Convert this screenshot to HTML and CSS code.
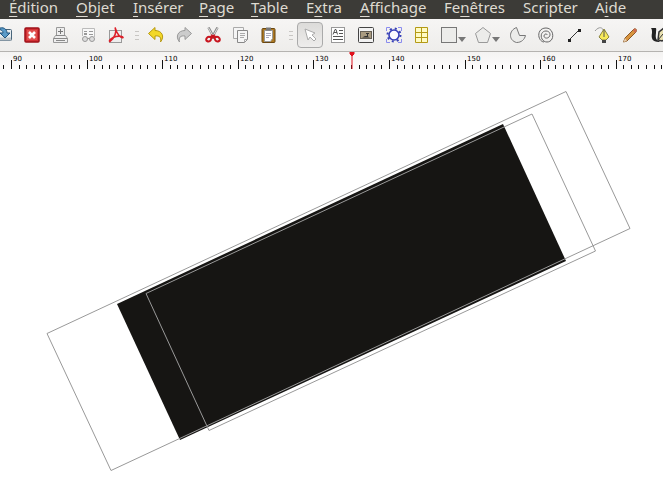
FILE: index.html
```html
<!DOCTYPE html>
<html lang="fr">
<head>
<meta charset="utf-8">
<title>Document</title>
<link rel="stylesheet" href="styles.css">
</head>
<body>
<nav class="menubar">
  <button><u>É</u>dition</button>
  <button><u>O</u>bjet</button>
  <button><u>I</u>nsérer</button>
  <button><u>P</u>age</button>
  <button><u>T</u>able</button>
  <button>E<u>x</u>tra</button>
  <button><u>A</u>ffichage</button>
  <button>Fe<u>n</u>êtres</button>
  <button>Scripter</button>
  <button>A<u>i</u>de</button>
</nav>
<div class="toolbar">
  <button aria-label="Enregistrer"><svg viewBox="0 0 20 20"><rect x="2.500" y="4.500" width="15" height="11" rx="1" fill="#e8edf0" stroke="#49657a"/><path d="M3 12.500h14v3H3z" fill="#bfc6ca"/><path d="M4 4c5-3 9 0 9 4h3l-5 5-5-5h3c0-2-1-3-5-4z" fill="#5b9bc8" stroke="#20537c"/></svg></button>
  <button aria-label="Fermer"><svg viewBox="0 0 20 20"><rect x="3" y="3" width="14" height="14" rx="1" fill="#d33034" stroke="#9e1018" stroke-width="1.500"/><rect x="5" y="5" width="10" height="10" fill="#e0504e"/><path d="M7 7l6 6M13 7l-6 6" stroke="#fff" stroke-width="2.600"/></svg></button>
  <button aria-label="Imprimer"><svg viewBox="0 0 20 20" fill="#eee" stroke="#999"><path d="M6.500 10V2.500h8V10M5.500 10.500h10l2 3v4h-14v-4z"/><path d="M3.500 13.500h14M6 15.500h9M6 10.500h9" stroke="#888"/><path d="M10.500 4v5M8 6.500h5" stroke="#777"/></svg></button>
  <button aria-label="Vérifier"><svg viewBox="0 0 20 20" fill="none" stroke="#999"><path d="M4.500 11V3.500h12V12" fill="#f8f8f8" stroke="#bbb"/><path d="M6 6.500h3M11 6.500h4M11 9.500h4"/><path d="M6 9h3" stroke-width="2"/><circle cx="7" cy="14" r="2.500" fill="#ddd"/><circle cx="14" cy="14" r="2.500" fill="#ddd"/><path d="M9.500 13.500h2"/></svg></button>
  <button aria-label="Exporter en PDF"><svg viewBox="0 0 20 20"><rect x="3.500" y="5.500" width="12" height="12" fill="#eee" stroke="#999"/><path d="M9 2.500c2 4 0 10-5 14-2-1 2-4 6-5s7 0 7 1c-2 1-6-3-8-10z" fill="none" stroke="#dc202a" stroke-width="1.600"/></svg></button>
  <span class="grip"></span>
  <button aria-label="Annuler"><svg viewBox="0 0 20 20"><path d="M2.500 8.500L9 2.500v3c7 0 10 6 5.500 11.500 1-5-1-6.500-5.500-6v3.500z" fill="#f3d829" stroke="#b79910"/></svg></button>
  <button aria-label="Rétablir"><svg viewBox="0 0 20 20"><path d="M17.500 8.500L11 2.500v3c-7 0-10 6-5.500 11.500-1-5 1-6.500 5.500-6v3.500z" fill="#ccc" stroke="#999"/></svg></button>
  <button aria-label="Couper"><svg viewBox="0 0 20 20" fill="none"><path d="M6.500 2.500l6 11M15.500 2.500l-6 11" stroke="#888" stroke-width="2.500"/><path d="M6.500 3l5 9M15.500 3l-5 9" stroke="#ddd"/><path d="M11 11l-3 1c-3-1-5 3-3 4s4 0 4-2zM11 11l3 1c3-1 5 3 3 4s-4 0-4-2z" stroke="#c8141e" stroke-width="2"/></svg></button>
  <button aria-label="Copier"><svg viewBox="0 0 20 20" fill="#f5f5f5" stroke="#888"><path d="M3.500 2.500h10v11h-10z" stroke="#aaa"/><path d="M7.500 5.500h10v9l-3 3h-7z"/><path d="M10 8.500h5M10 10.500h5M10 12.500h4M14.500 17v-2.500H17" stroke="#aaa"/></svg></button>
  <button aria-label="Coller"><svg viewBox="0 0 20 20"><rect x="4" y="3.500" width="13" height="14" rx="1" fill="#ad7922" stroke="#694711"/><path d="M6.500 5.500h8v8l-2 3h-6z" fill="#fff" stroke="#999"/><path d="M8 2.500h5v3H8z" fill="#777"/><path d="M8 8.500h5M8 10.500h5M8 12.500h3" stroke="#aab"/></svg></button>
  <span class="grip grip-wide"></span>
  <button class="active" aria-label="Sélectionner"><svg viewBox="0 0 20 20"><path d="M5 4l10 4-3 2 4 4-2 2-4-4-2 3z" fill="#fff" stroke="#aaa"/></svg></button>
  <button aria-label="Cadre de texte"><svg viewBox="0 0 20 20" fill="none" stroke="#555"><rect x="3.500" y="2.500" width="13" height="15" fill="#fff" stroke="#999"/><path d="M5 9.500l2-5h1l1.500 5M6 7.500h3M11 5.500h4M11 8.500h4M5 11.500h10M5 14.500h10"/></svg></button>
  <button aria-label="Cadre d’image"><svg viewBox="0 0 20 20"><rect x="2.500" y="2.500" width="15" height="15" rx="1" fill="#f2f2f2" stroke="#444"/><rect x="4.500" y="6.500" width="11" height="7" fill="#a99b80" stroke="#666055"/><path d="M6 12.500h8l-2-1V9h1V8h-3v1h1v2H9z" fill="#333"/></svg></button>
  <button aria-label="Cadre de rendu"><svg viewBox="0 0 20 20"><path d="M2.500 6V2.500H6M14 2.500h3.500V6M17.500 14v3.500H14M6 17.500H2.500V14" fill="none" stroke="#8a8cee"/><circle cx="10" cy="10" r="6.500" fill="none" stroke="#3840b8" stroke-width="2" stroke-dasharray="2 3.105"/><circle cx="10" cy="10" r="5" fill="#fbfbff" stroke="#3840b8" stroke-width="1.600"/></svg></button>
  <button aria-label="Tableau"><svg viewBox="0 0 20 20"><path d="M3.500 2.500h12v15h-12zM9.500 2.500v15M3.500 7.500h12M3.500 12.500h12" fill="#fffbc4" stroke="#b49a16"/></svg></button>
  <button class="split" aria-label="Forme"><svg viewBox="0 0 20 20"><rect x="2.500" y="2.500" width="15" height="15" fill="#ececea" stroke="#777"/></svg><i></i></button>
  <button class="split" aria-label="Polygone"><svg viewBox="0 0 20 20"><path d="M10 2.500l7.500 6-3 9h-9l-3-9z" fill="#ececea" stroke="#999"/></svg><i></i></button>
  <button aria-label="Arc"><svg viewBox="0 0 20 20"><path d="M8.500 2.500c-8 3-8 13 0 15 5 0 8-3 9-7h-6z" fill="#ececea" stroke="#777"/></svg></button>
  <button aria-label="Spirale"><svg viewBox="0 0 20 20"><path d="M11 10c0-2-3-1-3 1s3 3 5 1 1-6-3-6-6 4-4 8 8 4 10 0 0-11-6-11-8 5-7 9 4 5 5 5" fill="none" stroke="#666"/></svg></button>
  <button aria-label="Ligne"><svg viewBox="0 0 20 20"><path d="M5 15L15 5" stroke="#333"/><path d="M4 14h3v3H4zM14 4h3v3h-3z" fill="#222"/></svg></button>
  <button aria-label="Courbe de Bézier"><svg viewBox="0 0 20 20"><path d="M3 6c4-5 8-4 9 1" fill="none" stroke="#999"/><path d="M12 4l5 8-3 3h-4l-3-3z" fill="#f7e958" stroke="#8a8440"/><path d="M12 5v7" stroke="#555"/><path d="M10 15h4v3h-4z" fill="#444"/></svg></button>
  <button aria-label="Main levée"><svg viewBox="0 0 20 20"><path d="M5 13l9-9c2-1 3 1 2 3l-9 9-3.500 1z" fill="#d9953f" stroke="#8b5a27"/><path d="M14 4c2-1 3 1 2 3l-1 1-2-3z" fill="#cf6a50"/><path d="M5 13l2 3-3.500 1z" fill="#e8ceb0"/></svg></button>
  <button aria-label="Calligraphie"><svg viewBox="0 0 20 20"><path d="M3 3h4c2 0 1 2 1 5-1 6 1 8 4 8l-1 1c-7 0-8-4-7-9 0-2 0-4-1-5z" fill="#222"/><path d="M10 15l1-8 5-4 3 4v6l-5 3z" fill="#e8e0b0" stroke="#333" stroke-width="1.500"/><path d="M10 15l5-6" stroke="#333"/></svg></button>
</div>
<svg class="ruler" aria-label="Règle"></svg>
<main class="canvas">
  <svg viewBox="0 70 663 427" preserveAspectRatio="xMinYMin">
    <path d="M117 304L503 124L566 261L180 440z" fill="#161513"/>
    <path d="M47 333.500L566 91.500L630 228.500L111 470.500zM146 293.500L532 114L595.500 251L209 430.500z" fill="none" stroke="#999"/>
  </svg>
</main>
<script src="ruler.js"></script>
</body>
</html>
```
FILE: styles.css
```css
* { box-sizing: border-box; }
body { margin: 0; background: #fff; overflow: hidden; font-family: "Noto Sans", sans-serif; }
button { border: 0; padding: 0; margin: 0; background: none; font: inherit; color: inherit; }
.menubar {
  display: grid;
  grid-template-columns: 67px 57px 66px 52px 55px 54px 84px 79px 72px auto;
  align-items: start;
  height: 19px;
  padding-left: 9px;
  background: #3c3b37;
  color: #dfdbd2;
  font-size: 15px;
  line-height: 14px;
}
.menubar button { text-align: left; white-space: nowrap; }
.menubar u { text-underline-offset: 3px; text-decoration-thickness: 1px; text-decoration-skip-ink: none; }
.toolbar {
  display: flex;
  align-items: center;
  height: 33px;
  margin-left: -10px;
  background: linear-gradient(#f6f5f4, #eeedeb);
  border-bottom: 1px solid #b5b3b0;
}
.toolbar button {
  flex: none;
  display: flex;
  align-items: center;
  justify-content: center;
  width: 28px;
  height: 28px;
}
.toolbar svg { flex: none; width: 20px; height: 20px; }
.toolbar .active {
  width: 26px;
  height: 26px;
  margin: 0 1px;
  border: 1px solid #aaa;
  border-radius: 4px;
  background: linear-gradient(#dcdbd9, #eeedec);
}
.toolbar .split { width: 34px; justify-content: flex-start; padding-left: 3px; }
.split i {
  flex: none;
  margin: 8px 0 0 -1px;
  border: 4px solid transparent;
  border-top: 5px solid #777;
  border-bottom: 0;
}
.grip {
  flex: none;
  width: 12px;
  height: 9px;
  background: repeating-linear-gradient(#c8c6c3 0 1px, transparent 1px 4px) 5px 0 / 4px 9px no-repeat;
}
.grip-wide { width: 14px; background-position-x: 7px; }
.ruler { display: block; width: 100%; height: 18px; background: linear-gradient(#f4f3f2, #fdfdfd); font: 7px "DejaVu Sans", sans-serif; }
.canvas svg { display: block; width: 100%; }
```
FILE: ruler.js
```js
const ruler = document.querySelector(".ruler");
const origin = 11.5;
const unit = 7.56;
const cursor = 352;
let ticks = "";
let labels = "";
for (let i = -1; origin + i * unit < window.innerWidth; i++) {
  const x = Math.floor(origin + i * unit) + 0.5;
  const major = i % 10 === 0;
  ticks += `M${x} ${major ? 8 : 13}V17`;
  if (major) labels += `<text x="${x + 1.5}" y="9">${90 + i}</text>`;
}
ruler.innerHTML = `<path d="${ticks}" stroke="#111"/>${labels}
  <path d="M${cursor - 2} 0h4v2l-2 2-2-2zM${cursor} 3v14" fill="#e0101c" stroke="#e0101c"/>`;
```
